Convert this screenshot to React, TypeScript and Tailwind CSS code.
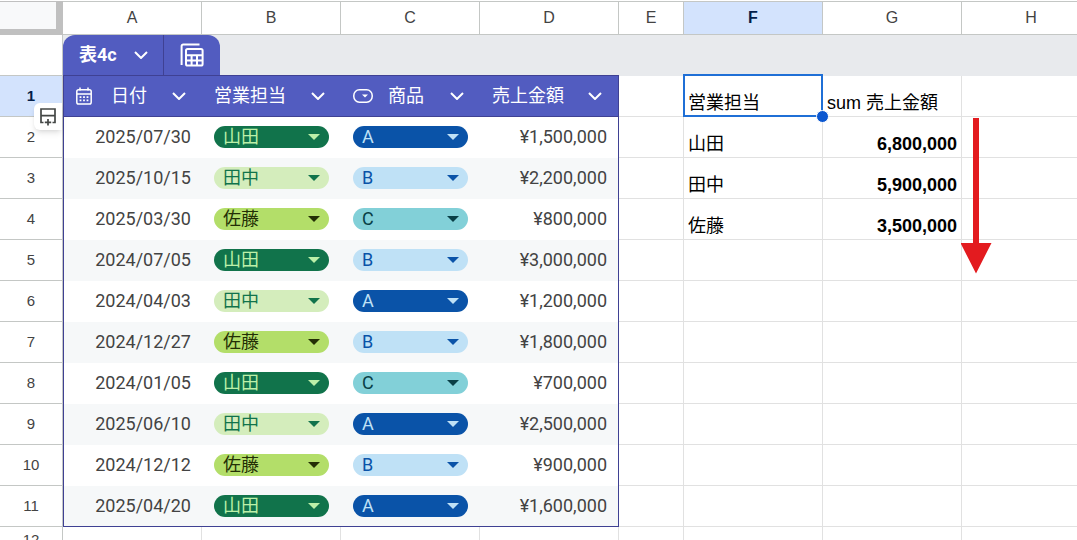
import type { ReactNode } from 'react';

type Rep = '山田' | '田中' | '佐藤';
type Product = 'A' | 'B' | 'C';

interface Sale {
  date: string;
  rep: Rep;
  product: Product;
  amount: string;
}

const sales: Sale[] = [
  { date: '2025/07/30', rep: '山田', product: 'A', amount: '¥1,500,000' },
  { date: '2025/10/15', rep: '田中', product: 'B', amount: '¥2,200,000' },
  { date: '2025/03/30', rep: '佐藤', product: 'C', amount: '¥800,000' },
  { date: '2024/07/05', rep: '山田', product: 'B', amount: '¥3,000,000' },
  { date: '2024/04/03', rep: '田中', product: 'A', amount: '¥1,200,000' },
  { date: '2024/12/27', rep: '佐藤', product: 'B', amount: '¥1,800,000' },
  { date: '2024/01/05', rep: '山田', product: 'C', amount: '¥700,000' },
  { date: '2025/06/10', rep: '田中', product: 'A', amount: '¥2,500,000' },
  { date: '2024/12/12', rep: '佐藤', product: 'B', amount: '¥900,000' },
  { date: '2025/04/20', rep: '山田', product: 'A', amount: '¥1,600,000' },
];

const totals: { rep: Rep; sum: string }[] = [
  { rep: '山田', sum: '6,800,000' },
  { rep: '田中', sum: '5,900,000' },
  { rep: '佐藤', sum: '3,500,000' },
];

const reps: Rep[] = ['山田', '田中', '佐藤'];
const products: Product[] = ['A', 'B', 'C'];

const chipColors: Record<Rep | Product, string> = {
  山田: 'bg-[#11734b] text-[#bcf0a8]',
  田中: 'bg-[#d4edbc] text-[#11734b]',
  佐藤: 'bg-[#b3de69] text-[#232f05]',
  A: 'bg-[#0a53a8] text-[#bfe1f6]',
  B: 'bg-[#bfe1f6] text-[#0a53a8]',
  C: 'bg-[#82d0d8] text-[#093f46]',
};

const cell = 'border-r border-b border-[#e1e1e1] bg-white';
const rowHead = 'border-r border-b border-[#c4c7c5] text-[15px] font-normal';
const plainText = "p-0 pb-px pl-1 align-bottom font-['Liberation_Sans','Noto_Sans_CJK_JP',sans-serif] text-lg leading-6 text-black";

function Chevron() {
  return (
    <svg viewBox="0 0 14 8" className="h-2 w-3.5" fill="none" stroke="currentColor" strokeWidth="2" aria-hidden="true">
      <path d="M1 1l6 6 6-6" />
    </svg>
  );
}

function CalendarIcon() {
  return (
    <svg viewBox="0 0 16 18" className="h-[18px] w-4" fill="none" aria-hidden="true">
      <rect x="0.8" y="2.8" width="14.4" height="14.2" rx="1.8" stroke="currentColor" strokeWidth="1.5" />
      <path d="M1 7h14M4 0.5v3M12 0.5v3" stroke="currentColor" strokeWidth="1.5" />
      <path d="M3.6 10.2h1.8M7.1 10.2h1.8M10.6 10.2h1.8M3.6 13.4h1.8M7.1 13.4h1.8M10.6 13.4h1.8" stroke="currentColor" strokeWidth="1.7" />
    </svg>
  );
}

function DropdownIcon() {
  return (
    <svg viewBox="0 0 20 14" className="h-3.5 w-5" fill="none" aria-hidden="true">
      <rect x="0.8" y="0.8" width="18.4" height="12.4" rx="5.6" stroke="currentColor" strokeWidth="1.5" />
      <path d="M9 5.6h6l-3 3z" fill="currentColor" />
    </svg>
  );
}

function TableIcon() {
  return (
    <svg viewBox="0 0 24 24" className="h-6 w-6" fill="none" stroke="currentColor" strokeWidth="2" aria-hidden="true">
      <path d="M1.6 22V3.200A1.6 1.6 0 0 1 3.200 1.600H19.500" />
      <rect x="6" y="6" width="16.600" height="16.600" rx="1.6" />
      <path d="M6 12.200h16.600M6 17.400h16.600M11.600 12v10.500M17 12v10.500" />
    </svg>
  );
}

function InsertRowIcon() {
  return (
    <svg viewBox="0 0 16 18" className="h-[18px] w-4" fill="none" stroke="currentColor" strokeWidth="1.7" aria-hidden="true">
      <path d="M3.500 14.500H1V1h14v13.500h-2.500M1 7.600h14M8 11v6.500M4.800 14.300h6.400" />
    </svg>
  );
}

function HeaderCell({ icon, edge = '', children }: { icon?: ReactNode; edge?: string; children: ReactNode }) {
  return (
    <td className={`border-b border-[#3f4193] bg-[#525cc0] p-0 text-white ${edge}`}>
      <div className="flex items-center pr-4 pl-3">
        {icon && <span className="flex w-[35px] shrink-0">{icon}</span>}
        <span className="grow text-lg leading-6">{children}</span>
        <button type="button" aria-label="列のメニュー" className="flex">
          <Chevron />
        </button>
      </div>
    </td>
  );
}

function Chip<T extends Rep | Product>({ value, options, label }: { value: T; options: T[]; label: string }) {
  return (
    <div className={`relative mx-3 h-[22px] rounded-full ${chipColors[value]}`}>
      <select
        aria-label={label}
        defaultValue={value}
        className="block h-[22px] w-full appearance-none rounded-full bg-transparent pl-[9px] text-lg leading-[22px]"
      >
        {options.map((o) => (
          <option key={o}>{o}</option>
        ))}
      </select>
      <svg viewBox="0 0 12 6" className="pointer-events-none absolute top-2 right-[9px] h-1.5 w-3" fill="currentColor" aria-hidden="true">
        <path d="M0 0h12L6 6z" />
      </svg>
    </div>
  );
}

function EmptyCells({ count }: { count: number }) {
  return (
    <>
      {Array.from({ length: count }, (_, i) => (
        <td key={i} className={cell} />
      ))}
    </>
  );
}

export default function App() {
  return (
    <main className="h-screen overflow-hidden bg-white pt-px font-['Roboto','Noto_Sans_CJK_JP',sans-serif] text-[#434343]">
      <table className="w-full min-w-[1101px] table-fixed border-separate border-spacing-0">
        <colgroup>
          <col className="w-[63px]" />
          <col className="w-[139px]" />
          <col className="w-[139px]" />
          <col className="w-[139px]" />
          <col className="w-[139px]" />
          <col className="w-[65px]" />
          <col className="w-[139px]" />
          <col className="w-[139px]" />
          <col className="w-[139px]" />
          <col />
        </colgroup>
        <thead className="font-['Liberation_Sans',sans-serif] text-base">
          <tr className="h-[34px]">
            <td className="border-t border-r-[7px] border-b-[6px] border-[#c0c0c0] bg-[#f8f9fa]" />
            {['A', 'B', 'C', 'D', 'E', 'F', 'G', 'H'].map((name) => (
              <th
                key={name}
                scope="col"
                className={`border-t border-r border-b border-[#c4c7c5] p-0 ${
                  name === 'F' ? 'bg-[#d3e3fd] font-bold text-[#041e49]' : 'font-normal'
                }`}
              >
                {name}
              </th>
            ))}
            <td className="border-t border-b border-[#c4c7c5] p-0" />
          </tr>
        </thead>
        <tbody>
          <tr className="h-[41px]">
            <td className="border-r border-b border-[#c4c7c5] p-0" />
            <td colSpan={4} className="border-b border-[#3f4193] bg-[#e8eaed] p-0">
              <div className="flex h-10 w-[157px] overflow-hidden rounded-t-xl bg-[#525cc0] text-white">
                <button type="button" className="flex grow items-center justify-between border-r border-[#3f4193] pr-[15px] pl-4 text-lg font-bold">
                  表4c
                  <Chevron />
                </button>
                <button type="button" aria-label="テーブルのビュー" className="flex w-14 items-center justify-center">
                  <TableIcon />
                </button>
              </div>
            </td>
            <td colSpan={5} className="bg-[#e8eaed] p-0" />
          </tr>
          <tr className="h-[41px]">
            <th scope="row" className="relative border-r border-b border-[#c4c7c5] bg-[#d3e3fd] p-0 font-['Liberation_Sans',sans-serif] text-[15px] font-bold text-[#041e49]">
              1
              <button
                type="button"
                aria-label="行を挿入"
                className="absolute top-[27px] right-0 z-10 flex h-[27px] w-7 items-center justify-center rounded-l-md bg-white text-[#444746] shadow-md"
              >
                <InsertRowIcon />
              </button>
            </th>
            <HeaderCell edge="border-l" icon={<CalendarIcon />}>
              日付
            </HeaderCell>
            <HeaderCell>営業担当</HeaderCell>
            <HeaderCell icon={<DropdownIcon />}>商品</HeaderCell>
            <HeaderCell edge="border-r">売上金額</HeaderCell>
            <EmptyCells count={1} />
            <td className={`${cell} ${plainText} relative`}>
              営業担当
              <span className="absolute -top-0.5 -right-px -bottom-px -left-px z-10 border-2 border-[#1f6fd6]" />
              <span className="absolute -right-[7px] -bottom-[7px] z-10 size-[13px] rounded-full border border-white bg-[#0b57d0]" />
            </td>
            <td className={`${cell} ${plainText}`}>sum 売上金額</td>
            <EmptyCells count={2} />
          </tr>
          {sales.map((sale, i) => {
            const total = totals[i];
            const lastRow = i === sales.length - 1;
            const fill = `${i % 2 ? 'bg-[#f6f8f9]' : 'bg-white'} border-[#3f4193] pt-0 pl-0 ${lastRow ? 'border-b pb-0' : 'pb-0.5'}`;
            return (
              <tr key={i} className="h-[41px]">
                <th scope="row" className={`${rowHead} p-0 font-['Liberation_Sans',sans-serif]`}>
                  {i + 2}
                </th>
                <td className={`${fill} border-l pr-[11px] text-right text-lg leading-6`}>{sale.date}</td>
                <td className={`${fill} pr-0`}>
                  <Chip value={sale.rep} options={reps} label="営業担当" />
                </td>
                <td className={`${fill} pr-0`}>
                  <Chip value={sale.product} options={products} label="商品" />
                </td>
                <td className={`${fill} border-r pr-[11px] text-right text-lg leading-6`}>{sale.amount}</td>
                <EmptyCells count={1} />
                <td className={`${cell} ${plainText}`}>{total?.rep}</td>
                <td className={`${cell} p-0 pr-1 pb-px text-right align-bottom font-['Liberation_Sans',sans-serif] text-lg leading-6 font-bold text-black`}>
                  {total?.sum}
                </td>
                <td className={`${cell} relative p-0`}>
                  {i === 0 && (
                    <svg viewBox="0 0 32 156" className="absolute top-px -left-px z-10 h-[156px] w-8" fill="#e31b1f" aria-hidden="true">
                      <path d="M12 0h6v125h12.500L15 155.500-.5 125H12z" />
                    </svg>
                  )}
                </td>
                <EmptyCells count={1} />
              </tr>
            );
          })}
          <tr className="h-[27px]">
            <th scope="row" className={`${rowHead} p-0 font-['Liberation_Sans',sans-serif]`}>12</th>
            <EmptyCells count={9} />
          </tr>
        </tbody>
      </table>
    </main>
  );
}
